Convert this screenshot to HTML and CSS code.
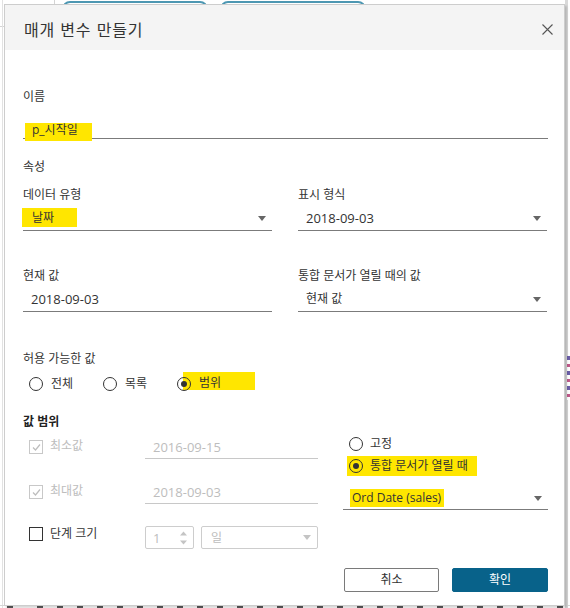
FILE: index.html
```html
<!DOCTYPE html>
<html lang="ko">
<head>
<meta charset="utf-8">
<title>매개 변수 만들기</title>
<link rel="stylesheet" href="styles.css">
</head>
<body>
<div class="app-bg">
  <span class="bg-vline"></span>
  <span class="bg-hline"></span>
  <span class="bg-left-line"></span>
  <span class="bg-pill bg-pill-1"></span>
  <span class="bg-pill bg-pill-2"></span>
  <span class="bg-right-band"></span>
  <span class="bg-right-icons"></span>
  <span class="bg-bottom"></span>
</div>

<div class="dialog">
  <div class="dlg-head">
    <h1 class="dlg-title">매개 변수 만들기</h1>
    <button class="dlg-close" aria-label="닫기">
      <svg width="11" height="11" viewBox="0 0 11 11"><path d="M0.5 0.5L10.5 10.5M10.5 0.5L0.5 10.5" stroke="#555" stroke-width="1.1" fill="none"/></svg>
    </button>
  </div>

  <div class="dlg-body">
    <div class="lbl">이름</div>
    <div class="field field-name"><span class="hl hl-name">p_시작일</span></div>

    <div class="lbl sec-props">속성</div>
    <div class="grid2">
      <div class="cell">
        <div class="lbl">데이터 유형</div>
        <div class="field select select-hl"><span class="hl hl-type">날짜</span><svg class="caret" width="8" height="5" viewBox="0 0 8 5"><path d="M0 0H8L4 5Z" fill="#666"/></svg></div>
      </div>
      <div class="cell">
        <div class="lbl">표시 형식</div>
        <div class="field select"><span class="date">2018-09-03</span><svg class="caret" width="8" height="5" viewBox="0 0 8 5"><path d="M0 0H8L4 5Z" fill="#666"/></svg></div>
      </div>
      <div class="cell">
        <div class="lbl">현재 값</div>
        <div class="field"><span class="date">2018-09-03</span></div>
      </div>
      <div class="cell">
        <div class="lbl">통합 문서가 열릴 때의 값</div>
        <div class="field select"><span>현재 값</span><svg class="caret" width="8" height="5" viewBox="0 0 8 5"><path d="M0 0H8L4 5Z" fill="#666"/></svg></div>
      </div>
    </div>

    <div class="lbl sec-allowed">허용 가능한 값</div>
    <div class="radios">
      <label class="radio-item"><span class="radio"></span><span class="radio-text">전체</span></label>
      <label class="radio-item"><span class="radio"></span><span class="radio-text">목록</span></label>
      <label class="radio-item radio-last"><span class="radio radio-on"></span><span class="radio-text hl hl-range">범위</span></label>
    </div>

    <div class="lbl sec-range">값 범위</div>
    <div class="range">
      <div class="range-left">
        <div class="range-row row-min">
          <div class="chk-area">
            <span class="chk chk-dis"><svg width="11" height="11" viewBox="0 0 11 11"><path d="M2 5.5L4.5 8L9 2.5" stroke="#bdbdbd" stroke-width="1.2" fill="none"/></svg></span>
            <span class="chk-text dis">최소값</span>
          </div>
          <div class="field range-input dis"><span class="date">2016-09-15</span></div>
        </div>
        <div class="range-row row-max">
          <div class="chk-area">
            <span class="chk chk-dis"><svg width="11" height="11" viewBox="0 0 11 11"><path d="M2 5.5L4.5 8L9 2.5" stroke="#bdbdbd" stroke-width="1.2" fill="none"/></svg></span>
            <span class="chk-text dis">최대값</span>
          </div>
          <div class="field range-input dis"><span class="date">2018-09-03</span></div>
        </div>
        <div class="range-row row-step">
          <div class="chk-area">
            <span class="chk"></span>
            <span class="chk-text">단계 크기</span>
          </div>
          <div class="step-controls">
            <div class="spinner dis">
              <span class="date">1</span>
              <svg width="9" height="16" viewBox="0 0 9 16"><path d="M1 5.5H8L4.5 1.5Z" fill="#c4c4c4"/><path d="M1 10.5H8L4.5 14.5Z" fill="#c4c4c4"/></svg>
            </div>
            <div class="dis-select dis">
              <span>일</span>
              <svg width="8" height="5" viewBox="0 0 8 5"><path d="M0 0H8L4 5Z" fill="#c4c4c4"/></svg>
            </div>
          </div>
        </div>
      </div>
      <div class="range-right">
        <label class="radio-item opt-fixed"><span class="radio"></span><span class="opt-text">고정</span></label>
        <label class="radio-item opt-open hl"><span class="radio radio-on"></span><span class="opt-text">통합 문서가 열릴 때</span></label>
        <div class="field select select-ord"><span class="hl hl-ord">Ord Date (sales)</span><svg class="caret" width="8" height="5" viewBox="0 0 8 5"><path d="M0 0H8L4 5Z" fill="#666"/></svg></div>
      </div>
    </div>

    <div class="buttons">
      <button class="btn btn-cancel">취소</button>
      <button class="btn btn-ok">확인</button>
    </div>
  </div>
</div>
</body>
</html>
```

FILE: styles.css
```css
* { box-sizing: border-box; }

html, body {
  margin: 0;
  padding: 0;
}

body {
  width: 570px;
  height: 608px;
  position: relative;
  overflow: hidden;
  background: #ffffff;
  font-family: "Open Sans", "Noto Sans CJK KR", sans-serif;
  font-size: 12px;
  line-height: 18px;
  color: #333333;
}

/* ---------- background application (under the modal) ---------- */
.app-bg {
  position: absolute;
  inset: 0;
}
.app-bg span { position: absolute; display: block; }
.bg-vline { left: 54px; top: 0; width: 1px; height: 8px; background: #d4d4d4; }
.bg-hline { left: 0; top: 26px; width: 8px; height: 1px; background: #d4d4d4; }
.bg-left-line { left: 2px; top: 0; width: 1px; height: 608px; background: #e2e2e2; }
.bg-pill {
  top: 1px;
  height: 24px;
  border: 2px solid #4d97b2;
  border-radius: 8px;
}
.bg-pill-1 { left: 62px; width: 146px; }
.bg-pill-2 { left: 220px; width: 146px; }
.bg-right-band { left: 565px; top: 0; width: 3px; height: 608px; background: #d9d9d9; }
.bg-right-icons {
  left: 567px; top: 356px; width: 3px; height: 44px;
  background: repeating-linear-gradient(#6b5ea8 0 4px, #fff 4px 8px, #c05a8a 8px 11px, #fff 11px 15px);
}
.bg-bottom {
  left: 0; top: 605px; width: 570px; height: 3px;
  background-image: repeating-linear-gradient(90deg, transparent 0 14px, #5a5a5a 14px 20px);
  background-position: 23px 0;
  border-top: 1px solid #d6d6d6;
}

/* ---------- dialog ---------- */
.dialog {
  position: absolute;
  left: 4px;
  top: 4px;
  width: 561px;
  height: 602px;
  background: #ffffff;
  border: 1px solid #cdcdcd;
  box-shadow: 2px 2px 2px rgba(0, 0, 0, 0.16);
  display: flex;
  flex-direction: column;
}

.dlg-head {
  height: 45px;
  flex: none;
  background: #f4f4f4;
  display: flex;
  align-items: center;
  justify-content: space-between;
  padding: 3px 11px 0 19px;
}

.dlg-title {
  margin: 0;
  font-family: "Noto Sans CJK KR", sans-serif;
  font-size: 16px;
  font-weight: 400;
  letter-spacing: 0.8px;
  line-height: 22px;
  color: #333333;
}

.dlg-close {
  border: 0;
  background: none;
  padding: 0;
  width: 11px;
  height: 11px;
  display: flex;
}

.dlg-body {
  padding: 38px 16px 0 18px;
  display: flex;
  flex-direction: column;
}

.lbl { line-height: 18px; }

.date { font-size: 13px; }

/* generic underlined field */
.field {
  margin-top: 5px;
  height: 22px;
  padding: 0 0 0 8px;
  line-height: 18px;
  border-bottom: 1px solid #7b7b7b;
  display: flex;
  align-items: flex-start;
}

.select { justify-content: space-between; }
.caret { margin: 7px 6px 0 0; flex: none; }

/* highlights (yellow marker) */
.hl { background: #ffe600; }

.field-name {
  margin-top: 14px;
  height: 19px;
  padding-left: 2px;
}
.hl-name {
  margin-top: 3px;
  line-height: 14px;
  padding: 0 14px 4px 7px;
  height: 18px;
}

.sec-props { margin-top: 19px; }

.grid2 {
  margin-top: 10px;
  display: grid;
  grid-template-columns: 249px 249px;
  column-gap: 26px;
  row-gap: 36px;
}

.select-hl { padding-left: 0; }
.hl-type {
  margin: -1px 0 0 -1px;
  padding: 1px 23px 0 10px;
}

.sec-allowed { margin-top: 38px; }

/* radios */
.radios {
  margin-top: 7px;
  height: 18px;
  padding-left: 6px;
  display: flex;
}
.radios .radio-item { width: 74px; flex: none; }
.radios .radio-last { width: auto; }

.radio-item {
  display: flex;
  align-items: flex-start;
  white-space: nowrap;
}

.radio {
  position: relative;
  z-index: 1;
  flex: none;
  width: 14px;
  height: 14px;
  margin-top: 2px;
  border: 1px solid #333333;
  border-radius: 50%;
}
.radio-on::after {
  content: "";
  position: absolute;
  left: 3px;
  top: 3px;
  width: 6px;
  height: 6px;
  border-radius: 50%;
  background: #333333;
}

.radio-text { margin-left: 8px; }
.hl-range {
  margin: -3px 0 0 -8px;
  padding: 3px 34px 0 16px;
  line-height: 15px;
  height: 18px;
}

.sec-range {
  margin-top: 20px;
  font-weight: 700;
  color: #222222;
}

/* value range */
.range {
  margin-top: 4px;
  display: flex;
  gap: 25px;
}
.range-left {
  width: 295px;
  flex: none;
  display: flex;
  flex-direction: column;
}
.range-row { display: flex; }
.row-min { margin-top: 3px; }
.row-max { margin-top: 24px; }
.row-step { margin-top: 22px; }

.chk-area {
  width: 122px;
  flex: none;
  padding-left: 6px;
  display: flex;
  align-items: flex-start;
  white-space: nowrap;
}
.chk {
  flex: none;
  width: 14px;
  height: 14px;
  margin-top: 2px;
  border: 1px solid #333333;
  display: flex;
  align-items: center;
  justify-content: center;
}
.chk-dis { border-color: #c8c8c8; }
.chk-text { margin: -1px 0 0 7px; }
.row-step .chk { margin-top: 1px; }

.dis { color: #bdbdbd; }

.range-input {
  margin-top: 0;
  width: 173px;
  height: 21px;
  border-bottom-color: #c8c8c8;
}

.step-controls {
  display: flex;
  gap: 7px;
}
.spinner, .dis-select {
  height: 23px;
  border: 1px solid #cdcdcd;
  border-radius: 2px;
  display: flex;
  align-items: center;
  justify-content: space-between;
}
.spinner {
  width: 49px;
  padding: 0 5px 0 7px;
}
.dis-select {
  width: 117px;
  padding: 0 6px 0 9px;
}

.range-right {
  flex: 1;
  display: flex;
  flex-direction: column;
  align-items: flex-start;
}
.opt-fixed { padding-left: 6px; height: 18px; }
.opt-text { margin-left: 7px; }
.opt-open {
  margin: 3px 0 0 4px;
  padding: 1px 9px 1px 2px;
  height: 20px;
}
.select-ord {
  align-self: stretch;
  margin-top: 13px;
  height: 21px;
  padding-left: 7px;
}
.hl-ord { padding: 0 3px 0 2px; }

/* buttons */
.buttons {
  margin-top: 19px;
  display: flex;
  justify-content: flex-end;
  gap: 13px;
}
.btn {
  height: 24px;
  width: 95px;
  border-radius: 2px;
  font-family: "Open Sans", "Noto Sans CJK KR", sans-serif;
  font-size: 12px;
  line-height: 18px;
  padding: 0;
}
.btn-cancel {
  background: #ffffff;
  border: 1px solid #7a7a7a;
  color: #333333;
}
.btn-ok {
  width: 96px;
  background: #08628a;
  border: 1px solid #08628a;
  color: #ffffff;
}
```
